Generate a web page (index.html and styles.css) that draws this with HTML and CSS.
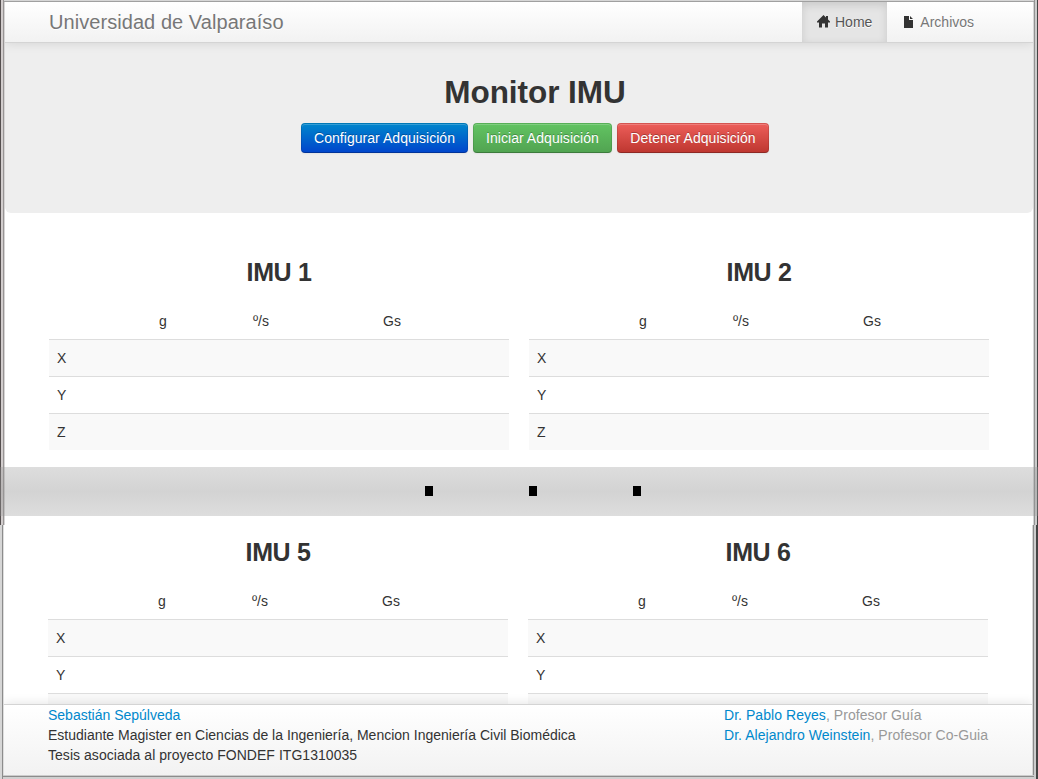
FILE: index.html
```html
<!DOCTYPE html>
<html lang="es">
<head>
<meta charset="utf-8">
<title>Monitor IMU</title>
<link rel="stylesheet" href="styles.css">
</head>
<body>
<div class="screen">
  <section class="window window-top">
    <header class="navbar">
      <a class="brand">Universidad de Valparaíso</a>
      <nav class="nav">
        <a class="nav-item active"><svg class="icon" width="14" height="14" viewBox="0 0 14 14"><path d="M6.5 0 L0 6.5 V7.5 H2 V12.6 H5 V8.6 H8 V12.6 H11 V7.5 H13 V6.5 L11 4.5 V1 H9 V2.5 Z"/></svg>Home</a>
        <a class="nav-item"><svg class="icon" width="14" height="14" viewBox="0 0 14 14"><path d="M2 1 H7 V5 H11 V13 H2 Z M8 1 L11 4 H8 Z"/></svg>Archivos</a>
      </nav>
    </header>
    <div class="hero">
      <h1>Monitor IMU</h1>
      <div class="buttons">
        <button class="btn primary">Configurar Adquisición</button>
        <button class="btn success">Iniciar Adquisición</button>
        <button class="btn danger">Detener Adquisición</button>
      </div>
    </div>
    <main class="grid">
      <section class="imu">
        <h2>IMU 1</h2>
        <table>
          <colgroup><col class="c1"><col class="c2"><col class="c3"><col class="c4"></colgroup>
          <thead><tr><td></td><td>g</td><td>º/s</td><td>Gs</td></tr></thead>
          <tbody><tr><td>X</td><td></td><td></td><td></td></tr><tr><td>Y</td><td></td><td></td><td></td></tr><tr><td>Z</td><td></td><td></td><td></td></tr></tbody>
        </table>
      </section>
      <section class="imu">
        <h2>IMU 2</h2>
        <table>
          <colgroup><col class="c1"><col class="c2"><col class="c3"><col class="c4"></colgroup>
          <thead><tr><td></td><td>g</td><td>º/s</td><td>Gs</td></tr></thead>
          <tbody><tr><td>X</td><td></td><td></td><td></td></tr><tr><td>Y</td><td></td><td></td><td></td></tr><tr><td>Z</td><td></td><td></td><td></td></tr></tbody>
        </table>
      </section>
    </main>
  </section>
  <div class="band"><i class="dot"></i><i class="dot"></i><i class="dot"></i></div>
  <section class="window window-bottom">
    <main class="grid">
      <section class="imu">
        <h2>IMU 5</h2>
        <table>
          <colgroup><col class="c1"><col class="c2"><col class="c3"><col class="c4"></colgroup>
          <thead><tr><td></td><td>g</td><td>º/s</td><td>Gs</td></tr></thead>
          <tbody><tr><td>X</td><td></td><td></td><td></td></tr><tr><td>Y</td><td></td><td></td><td></td></tr><tr><td></td><td></td><td></td><td></td></tr></tbody>
        </table>
      </section>
      <section class="imu">
        <h2>IMU 6</h2>
        <table>
          <colgroup><col class="c1"><col class="c2"><col class="c3"><col class="c4"></colgroup>
          <thead><tr><td></td><td>g</td><td>º/s</td><td>Gs</td></tr></thead>
          <tbody><tr><td>X</td><td></td><td></td><td></td></tr><tr><td>Y</td><td></td><td></td><td></td></tr><tr><td></td><td></td><td></td><td></td></tr></tbody>
        </table>
      </section>
    </main>
    <footer class="footer">
      <div><a>Sebastián Sepúlveda</a><br>Estudiante Magister en Ciencias de la Ingeniería, Mencion Ingeniería Civil Biomédica<br><span class="project">Tesis asociada al proyecto FONDEF ITG1310035</span></div>
      <div class="muted"><a>Dr. Pablo Reyes</a>, Profesor Guía<br><a>Dr. Alejandro Weinstein</a>, Profesor Co-Guia</div>
    </footer>
  </section>
</div>
</body>
</html>
```
FILE: styles.css
```css
* { box-sizing: border-box; }
body {
  margin: 0;
  font: 14px/20px "Liberation Sans", Arial, sans-serif;
  color: #333;
  background: #fff;
}
.screen {
  position: relative;
  width: 1038px;
  height: 779px;
  overflow: hidden;
  display: flex;
  flex-direction: column;
}

/* Window frames: thin vertical strips on both sides */
.window { display: flex; flex-direction: column; }
.window-top {
  height: 525px;
  padding: 2px 5px 0;
  background:
    linear-gradient(#d6d6d6 1px, #a0a0a0 1px, #a0a0a0 2px, transparent 2px) 4px 0 / 1030px 100% no-repeat,
    linear-gradient(90deg, #554f4f 1px, #d2cdcd 1px, #d2cdcd 3px, #989595 3px, #989595 4px, #d6d4d4 4px) 0 0 / 5px 100% no-repeat,
    linear-gradient(90deg, #d6d6d6 1px, #929292 1px, #929292 2px, #cccccc 2px, #cccccc 4px, #444 4px) 100% 0 / 5px 100% no-repeat,
    #fff;
}
.window-bottom {
  height: 254px;
  padding: 0 6px 4px 4px;
  background:
    linear-gradient(#ccc 1px, #8c8c8c 1px, #8c8c8c 2px, #d0d0d0 2px) 3px 100% / 1031px 4px no-repeat,
    linear-gradient(90deg, #d6d6d6 2px, #8c8c8c 2px, #8c8c8c 3px, #dedede 3px) 0 0 / 4px 100% no-repeat,
    linear-gradient(90deg, #d6d6d6 1px, #8c8c8c 1px, #8c8c8c 2px, #ccc 2px, #ccc 4px, #444 4px) 100% 0 / 6px 100% no-repeat,
    #fff;
}

.navbar {
  flex: none;
  position: relative;
  height: 41px;
  padding-left: 44px;
  display: flex;
  justify-content: space-between;
  background: linear-gradient(#fff, #f2f2f2);
  border-bottom: 1px solid #d4d4d4;
  box-shadow: 0 1px 10px rgba(0, 0, 0, .1);
  clip-path: inset(0 0 -12px 0);
  color: #777;
  text-shadow: 0 1px 0 #fff;
}
.brand { font-size: 20px; letter-spacing: .06px; padding-top: 10px; }
.nav { display: flex; width: 231px; }
.nav-item { padding: 10px 15px; white-space: nowrap; }
.nav-item.active {
  color: #555;
  background: #e5e5e5;
  box-shadow: inset 0 3px 8px rgba(0, 0, 0, .125);
}
.icon { margin-right: 4px; vertical-align: -2px; fill: #333; }

.hero {
  flex: none;
  height: 170px;
  padding: 29px 0 0 32px;
  background: #eee;
  border-radius: 0 0 6px 6px;
  text-align: center;
}
h1 { margin: 0 0 11px; font-size: 31.5px; line-height: 40px; letter-spacing: -.05px; }
.buttons { display: flex; justify-content: center; gap: 5px; }
.btn {
  height: 30px;
  padding: 4px 0;
  font: 14px/20px "Liberation Sans", Arial, sans-serif;
  letter-spacing: .04px;
  color: #fff;
  text-shadow: 0 -1px 0 rgba(0, 0, 0, .25);
  border: 1px solid;
  border-color: rgba(0, 0, 0, .1) rgba(0, 0, 0, .1) rgba(0, 0, 0, .25);
  border-radius: 4px;
  background-origin: border-box;
  box-shadow: inset 0 1px 0 rgba(255, 255, 255, .2), 0 1px 2px rgba(0, 0, 0, .05);
}
.primary { width: 167px; background-image: linear-gradient(#08c, #04c); }
.success { width: 139px; background-image: linear-gradient(#62c462, #51a351); }
.danger { width: 152px; background-image: linear-gradient(#ee5f5b, #bd362f); }

.grid {
  display: grid;
  grid-template-columns: 460px 460px;
  column-gap: 20px;
  margin-left: 44px;
}
.window-top .grid { padding-top: 39px; }
.window-bottom .grid { height: 179px; padding-top: 7px; overflow: hidden; }
h2 { margin: 0 0 11px; font-size: 25px; line-height: 40px; letter-spacing: -.35px; text-align: center; }
table { width: 460px; table-layout: fixed; border-collapse: separate; border-spacing: 0; }
td { height: 37px; padding: 8px; border-top: 1px solid #ddd; line-height: 20px; }
thead td { height: 36px; border-top: 0; }
tbody tr:nth-child(odd) { background: #f9f9f9; }
.c1 { width: 102px; }
.c2 { width: 94px; }
.c3 { width: 130px; }
.c4 { width: 134px; }

/* Translucent divider across the seam of the two windows */
.band {
  position: absolute;
  left: 0;
  top: 467px;
  width: 1038px;
  height: 49px;
  padding: 19px 0 0 425px;
  display: flex;
  gap: 96px;
  background: linear-gradient(rgba(150, 150, 150, .32), rgba(150, 150, 150, .42) 50%, rgba(150, 150, 150, .32));
}
.dot { width: 8px; height: 10px; background: #000; }

.footer {
  flex: none;
  position: relative;
  height: 71px;
  padding-left: 44px;
  display: grid;
  grid-template-columns: 676px auto;
  background: linear-gradient(#fff, #f2f2f2);
  border-top: 1px solid #d4d4d4;
  box-shadow: 0 -1px 10px rgba(0, 0, 0, .1);
  clip-path: inset(-12px 0 0 0);
}
.footer a { color: #08c; }
.project { letter-spacing: .04px; }
.muted { color: #999; letter-spacing: .05px; }
```
